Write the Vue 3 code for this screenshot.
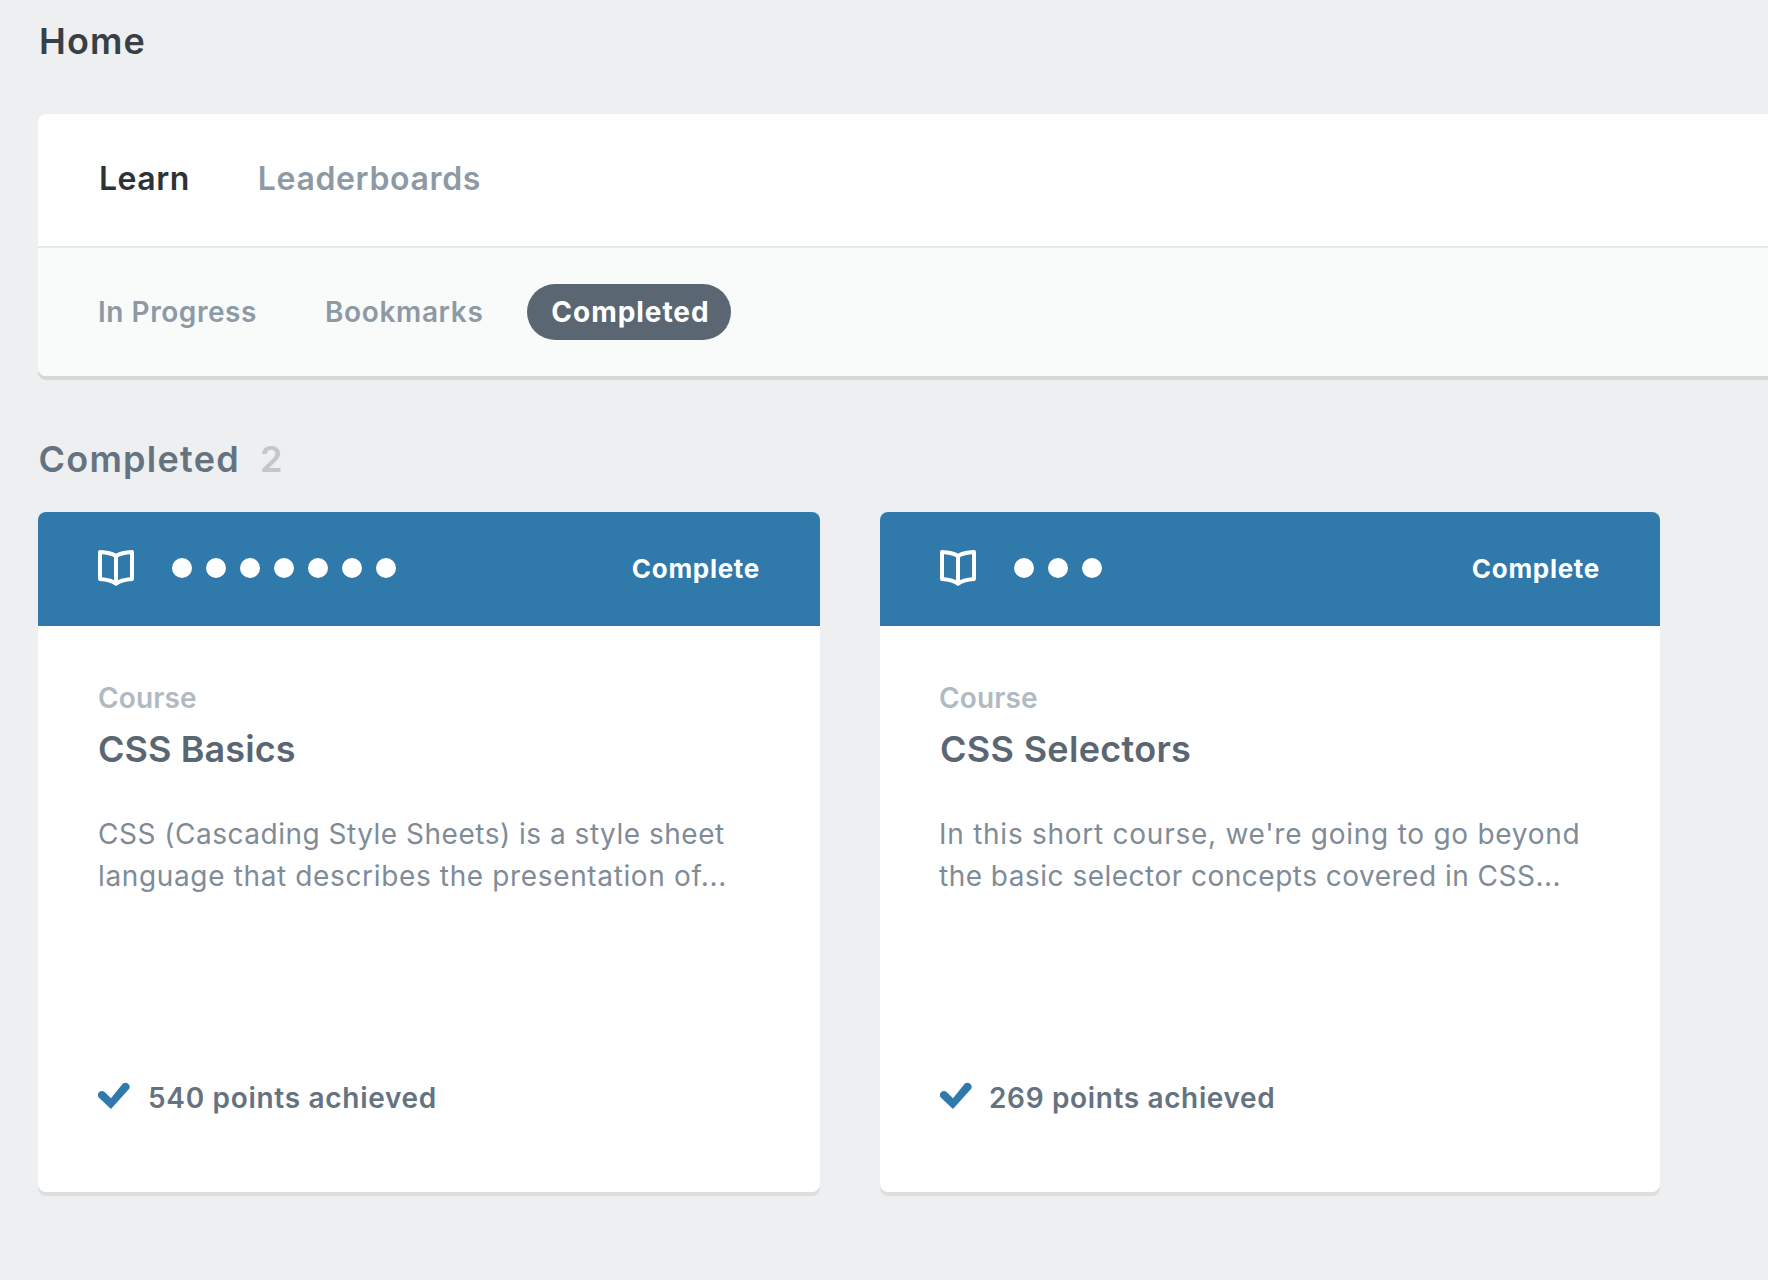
<script setup>
const courses = [
  {
    id: 'basics',
    title: 'CSS Basics',
    stages: 7,
    lines: [
      'CSS (Cascading Style Sheets) is a style sheet',
      'language that describes the presentation of...',
    ],
    points: 540,
  },
  {
    id: 'selectors',
    title: 'CSS Selectors',
    stages: 3,
    lines: [
      "In this short course, we're going to go beyond",
      'the basic selector concepts covered in CSS...',
    ],
    points: 269,
  },
]
</script>

<template>
  <main class="page">
    <h1 class="page-title">Home</h1>

    <section class="panel">
      <nav class="tabs">
        <a class="tab learn active">Learn</a>
        <a class="tab">Leaderboards</a>
      </nav>
      <nav class="filters">
        <a class="filter progress">In Progress</a>
        <a class="filter bookmarks">Bookmarks</a>
        <a class="filter selected">Completed</a>
      </nav>
    </section>

    <h2 class="section-title">Completed<span class="count">2</span></h2>

    <div class="cards">
      <article v-for="course in courses" :key="course.id" class="card" :class="course.id">
        <header class="card-header">
          <svg class="book" viewBox="0 0 36 36" width="36" height="36">
            <path
              d="M2 2Q12.500 2.500 18 6Q23.500 2.500 34 2V29Q22.500 30 18 33.600Q13.500 30 2 29ZM18 6V33"
              fill="none"
              stroke="#fff"
              stroke-width="4"
              stroke-linejoin="round"
            />
          </svg>
          <div class="dots">
            <i v-for="n in course.stages" :key="n" class="dot"></i>
          </div>
          <span class="status">Complete</span>
        </header>
        <div class="card-body">
          <div class="kind">Course</div>
          <h3 class="card-title">{{ course.title }}</h3>
          <p class="description">
            <span v-for="line in course.lines" :key="line" class="line">{{ line }}</span>
          </p>
          <div class="points">
            <svg class="check" viewBox="0 0 32 27" width="32" height="27">
              <path
                d="M6.600 10.100L13 16.300L24.900 1.600A4.200 4.200 0 0 1 31.200 6.800L13 27L1 15.800A4 4 0 0 1 6.600 10.100Z"
                fill="#3079ab"
              />
            </svg>
            <span class="points-text">{{ course.points }} points achieved</span>
          </div>
        </div>
      </article>
    </div>
  </main>
</template>

<style>
body {
  background: #edeff0;
  overflow: hidden;
}
</style>

<style scoped>
.page {
  box-sizing: border-box;
  height: 1280px;
  padding: 21px 0 0 38px;
  overflow: hidden;
  font-family: Inter, 'Liberation Sans', sans-serif;
  font-weight: 600;
  white-space: nowrap;
}

.page-title {
  margin: 0 0 53px;
  padding-left: 1px;
  font-size: 36px;
  line-height: 40px;
  font-weight: 600;
  letter-spacing: 1.1px;
  color: #384047;
}

.panel {
  width: 1800px;
  border-radius: 8px;
  background: #fff;
  box-shadow: 0 4px 0 #d4d7d7;
}

.tabs {
  display: flex;
  align-items: center;
  box-sizing: border-box;
  height: 134px;
  padding: 0 61px 3px;
  border-bottom: 2px solid #e6e9ec;
  font-size: 32px;
  line-height: 40px;
  letter-spacing: 0.645px;
}

.tab {
  color: #8d9aa6;
}

.tab.active {
  margin-right: 68px;
  letter-spacing: 0.5px;
  color: #2c3238;
}

.filters {
  display: flex;
  align-items: center;
  height: 128px;
  padding: 0 60px;
  border-radius: 0 0 8px 8px;
  background: #f9fbfa;
  font-size: 28px;
  line-height: 56px;
  letter-spacing: 0.65px;
  color: #8d9aa6;
}

.progress {
  margin-right: 68px;
  letter-spacing: 0.55px;
}

.bookmarks {
  margin-right: 44px;
}

.selected {
  box-sizing: border-box;
  width: 204px;
  padding-left: 2px;
  border-radius: 28px;
  background: #5a6772;
  color: #fff;
  font-weight: 700;
  letter-spacing: 0.95px;
  text-align: center;
}

.section-title {
  margin: 63px 0 33px;
  padding-left: 0.5px;
  font-size: 36px;
  line-height: 40px;
  font-weight: 600;
  letter-spacing: 1.25px;
  color: #657380;
}

.count {
  margin-left: 20px;
  color: #c1c7cc;
}

.cards {
  display: flex;
  gap: 60px;
}

.card {
  display: flex;
  flex-direction: column;
  width: 780px;
  height: 680px;
  border-radius: 8px;
  background: #fff;
  box-shadow: 0 4px 0 #dcdee0;
}

.card.basics {
  width: 782px;
}

.card-header {
  display: flex;
  align-items: center;
  box-sizing: border-box;
  height: 114px;
  padding: 0 60px 2px;
  border-radius: 8px 8px 0 0;
  background: #3079ab;
}

.book {
  display: block;
}

.dots {
  display: flex;
  gap: 14px;
  margin-left: 38px;
}

.dot {
  width: 20px;
  height: 20px;
  border-radius: 50%;
  background: #fff;
}

.status {
  margin-left: auto;
  padding-top: 2px;
  font-size: 26px;
  line-height: 34px;
  font-weight: 700;
  letter-spacing: 0.7px;
  color: #fff;
}

.card-body {
  display: flex;
  flex: 1;
  flex-direction: column;
  padding: 55px 60px 77px;
}

.kind {
  font-size: 28px;
  line-height: 34px;
  letter-spacing: 0.136px;
  color: #b1bac2;
}

.selectors .kind,
.selectors .description {
  margin-left: -1px;
}

.card-title {
  margin: 12px 0 42px;
  font-size: 36px;
  line-height: 44px;
  font-weight: 600;
  letter-spacing: 0.08px;
  color: #5a6772;
}

.selectors .card-title {
  letter-spacing: 0.302px;
}

.description {
  margin: 0;
  font-size: 28px;
  line-height: 42px;
  font-weight: 400;
  color: #7f8c97;
}

.line {
  display: block;
  letter-spacing: 0.506px;
}

.line:last-child {
  letter-spacing: 0.64px;
}

.selectors .line {
  letter-spacing: 0.74px;
}

.selectors .line:last-child {
  letter-spacing: 0.489px;
}

.points {
  display: flex;
  align-items: center;
  gap: 18px;
  margin-top: auto;
  font-size: 28px;
  line-height: 34px;
  letter-spacing: 0.7px;
  color: #657380;
}

.check {
  display: block;
  margin-bottom: 5px;
}

.selectors .points {
  gap: 17px;
  letter-spacing: 0.64px;
}
</style>
